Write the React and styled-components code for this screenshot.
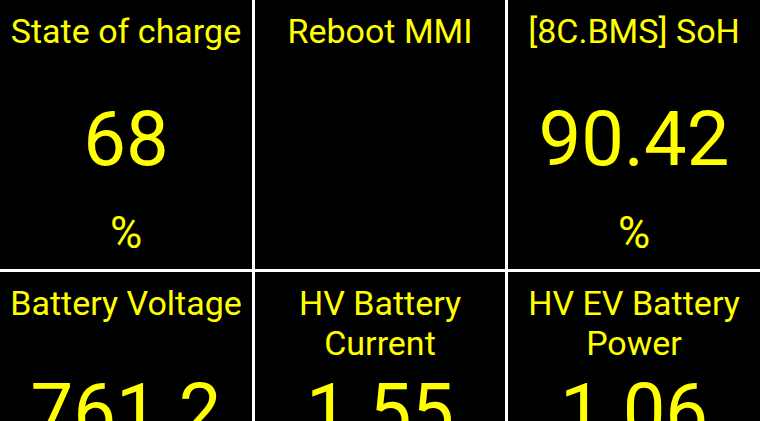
import styled, { createGlobalStyle } from 'styled-components';

const GlobalStyle = createGlobalStyle`
  html, body {
    margin: 0;
    padding: 0;
    background: #ffffff;
  }
  body {
    font-family: Roboto, "Noto Sans", "Liberation Sans", sans-serif;
    overflow: hidden;
  }
`;

const gauges = [
  { title: 'State of charge', value: '68', unit: '%' },
  { title: 'Reboot MMI' },
  { title: '[8C.BMS] SoH', value: '90.42', unit: '%' },
  { title: 'Battery Voltage', value: '761.2', unit: 'V' },
  { title: 'HV Battery Current', value: '1.55', unit: 'A' },
  { title: 'HV EV Battery Power', value: '1.06', unit: 'kW' },
];

export default function App() {
  return (
    <>
      <GlobalStyle />
      <Screen>
        <Grid>
          {gauges.map((g) => (
            <Tile key={g.title}>
              <Title>{g.title}</Title>
              <Value>{g.value}</Value>
              <Unit>{g.unit}</Unit>
            </Tile>
          ))}
        </Grid>
      </Screen>
    </>
  );
}

const Screen = styled.div`
  width: 760px;
  height: 421px;
  overflow: hidden;
  background: #ffffff;
`;

const Grid = styled.div`
  display: grid;
  grid-template-columns: 252px 250px 252px;
  grid-auto-rows: 269px;
  column-gap: 3px;
  row-gap: 3px;
`;

const Tile = styled.div`
  background: #000000;
  color: #ffff00;
  display: grid;
  grid-template-rows: 101px 76px auto;
  justify-items: center;
  text-align: center;
  overflow: hidden;
`;

const Title = styled.div`
  align-self: start;
  padding: 11px 8px 0;
  font-size: 34px;
  line-height: 40px;
`;

const Value = styled.div`
  font-size: 76px;
  line-height: 76px;
  white-space: nowrap;
`;

const Unit = styled.div`
  margin-top: 34px;
  font-size: 44px;
  line-height: 44px;
`;
